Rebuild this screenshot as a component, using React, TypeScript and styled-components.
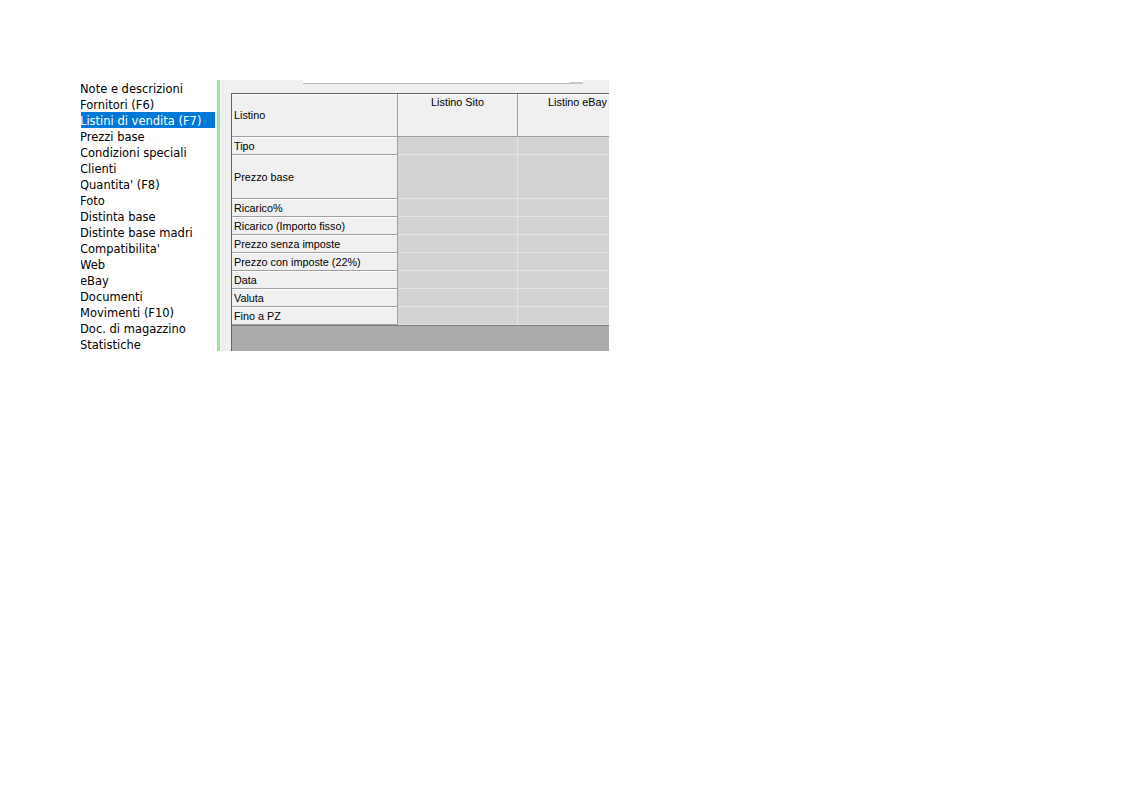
import React from "react";
import styled, { createGlobalStyle } from "styled-components";

const GlobalStyle = createGlobalStyle`
	html, body {
		margin: 0;
		padding: 0;
		background: #ffffff;
	}
`;

const menuItems = [
	"Note e descrizioni",
	"Fornitori (F6)",
	"Listini di vendita (F7)",
	"Prezzi base",
	"Condizioni speciali",
	"Clienti",
	"Quantita' (F8)",
	"Foto",
	"Distinta base",
	"Distinte base madri",
	"Compatibilita'",
	"Web",
	"eBay",
	"Documenti",
	"Movimenti (F10)",
	"Doc. di magazzino",
	"Statistiche",
];

const columns = ["Listino Sito", "Listino eBay"];

const rows: { label: string; tall?: boolean }[] = [
	{ label: "Tipo" },
	{ label: "Prezzo base", tall: true },
	{ label: "Ricarico%" },
	{ label: "Ricarico (Importo fisso)" },
	{ label: "Prezzo senza imposte" },
	{ label: "Prezzo con imposte (22%)" },
	{ label: "Data" },
	{ label: "Valuta" },
	{ label: "Fino a PZ" },
];

function App() {
	return (
		<Page>
			<GlobalStyle />
			<Shot>
				<Sidebar>
					{menuItems.map((item, i) => (
						<MenuItem key={item} selected={i === 2}>
							<MenuLabel>{item}</MenuLabel>
						</MenuItem>
					))}
				</Sidebar>
				<Divider />
				<Panel>
					<FieldStrip>
						<FieldButton />
					</FieldStrip>
					<GridArea>
						<Grid>
							<CornerCell>Listino</CornerCell>
							{columns.map((col) => (
								<ColumnHeader key={col}>{col}</ColumnHeader>
							))}
							{rows.map((row) => (
								<React.Fragment key={row.label}>
									<RowHeader tall={row.tall}>{row.label}</RowHeader>
									{columns.map((col) => (
										<DataCell key={col} tall={row.tall} />
									))}
								</React.Fragment>
							))}
						</Grid>
					</GridArea>
				</Panel>
			</Shot>
		</Page>
	);
}

const Page = styled.div`
	padding: 80px 0 0 81px;
`;

const Shot = styled.div`
	display: flex;
	width: 528px;
	height: 271px;
	overflow: hidden;
`;

const Sidebar = styled.div`
	width: 136px;
	flex-shrink: 0;
	padding-right: 2px;
	box-sizing: border-box;
	background: #ffffff;
	overflow: hidden;
`;

const MenuItem = styled.div<{ selected?: boolean }>`
	height: 16px;
	overflow: hidden;
	font-family: "DejaVu Sans", Verdana, sans-serif;
	font-size: 11.5px;
	white-space: nowrap;
	color: ${(p) => (p.selected ? "#ffffff" : "#000000")};
	background: ${(p) => (p.selected ? "#0078d7" : "transparent")};
`;

const MenuLabel = styled.span`
	display: block;
	line-height: 16px;
	padding-top: 1px;
	margin-left: -1px;
`;

const Divider = styled.div`
	width: 3px;
	flex-shrink: 0;
	box-sizing: border-box;
	border-left: 1px solid #c4c4c4;
	background: #a3e3a3;
`;

const Panel = styled.div`
	flex: 1;
	display: flex;
	flex-direction: column;
	background: #f0f0f0;
	padding-left: 11px;
	overflow: hidden;
`;

const FieldStrip = styled.div`
	position: relative;
	width: 280px;
	height: 3px;
	margin-left: 72px;
	margin-bottom: 9px;
	background: #ffffff;
	border-bottom: 1px solid #b9b9b9;
`;

const FieldButton = styled.div`
	position: absolute;
	right: 0;
	bottom: -1px;
	width: 13px;
	height: 2px;
	background: #c9c9c9;
`;

const GridArea = styled.div`
	flex: 1;
	background: #ababab;
	border-top: 1px solid #646464;
	border-left: 1px solid #646464;
	overflow: hidden;
`;

const Grid = styled.div`
	display: grid;
	grid-template-columns: 166px 120px 120px;
	width: 406px;
	border-bottom: 1px solid #7e7e7e;
	font-family: "Liberation Sans", Arial, sans-serif;
	font-size: 10.8px;
	color: #000000;
`;

const HeaderBase = styled.div`
	box-sizing: border-box;
	background: #f0f0f0;
	border-right: 1px solid #a0a0a0;
	border-bottom: 1px solid #a0a0a0;
	box-shadow: inset 0 1px 0 #ffffff;
	white-space: nowrap;
	overflow: hidden;
`;

const CornerCell = styled(HeaderBase)`
	height: 43px;
	display: flex;
	align-items: center;
	padding-left: 2px;
`;

const ColumnHeader = styled(HeaderBase)`
	height: 43px;
	text-align: center;
	padding-top: 2px;
`;

const RowHeader = styled(HeaderBase)<{ tall?: boolean }>`
	height: ${(p) => (p.tall ? 44 : 18)}px;
	display: flex;
	align-items: center;
	padding-left: 2px;
`;

const DataCell = styled.div<{ tall?: boolean }>`
	box-sizing: border-box;
	height: ${(p) => (p.tall ? 44 : 18)}px;
	background: #d3d3d3;
	border-right: 1px solid #e4e4e4;
	border-bottom: 1px solid #e4e4e4;
`;

export default App;
